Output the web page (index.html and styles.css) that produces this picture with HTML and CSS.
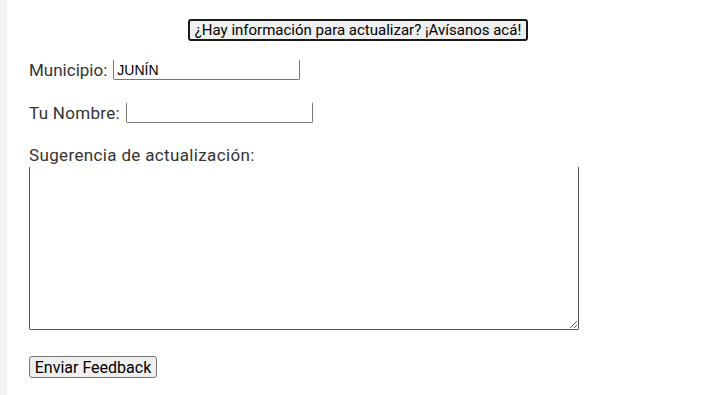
FILE: index.html
```html
<!DOCTYPE html>
<html lang="es">

<head>
    <meta charset="UTF-8">
    <meta name="viewport" content="width=device-width, initial-scale=1.0">
    <title>Feedback</title>
    <link rel="stylesheet" href="styles.css">
</head>

<body>
    <div class="side"></div>
    <div class="main">
        <div class="top">
            <button class="toggle">¿Hay información para actualizar? ¡Avísanos acá!</button>
        </div>
        <form class="feedback">
            <div class="field">
                <label for="municipio">Municipio:</label>
                <input type="text" id="municipio" value="JUNÍN">
            </div>
            <div class="field second">
                <label for="nombre">Tu Nombre:</label>
                <input type="text" id="nombre">
            </div>
            <label class="block-label" for="sugerencia">Sugerencia de actualización:</label>
            <textarea id="sugerencia"></textarea>
            <button type="button" class="send">Enviar Feedback</button>
        </form>
    </div>
</body>

</html>
```

FILE: styles.css
```css
/* page */
body {
    margin: 0;
    display: flex;
    min-height: 395px;
    background: #ffffff;
    font-family: Roboto, "Liberation Sans", Arial, sans-serif;
    color: #333333;
}

.side {
    width: 7px;
    background-color: #f3f3f3;
    flex-shrink: 0;
}

.main {
    flex: 1;
}

.top {
    text-align: center;
    padding-left: 5px;
    padding-top: 19px;
}

.toggle {
    height: 22px;
    padding: 0 5px;
    font-family: inherit;
    font-size: 15px;
    color: #000000;
    background-color: #efefef;
    border: 2px solid #1a1a1a;
    border-radius: 3px;
    line-height: 18px;
}

.feedback {
    padding-left: 22px;
}

.field {
    display: flex;
    align-items: center;
    height: 21px;
    margin-top: 18px;
    font-size: 17px;
}

.field.second {
    margin-top: 22px;
}

.field label {
    margin-right: 6px;
}

.field.second label {
    letter-spacing: 0.3px;
}

/* top edge of the boxes is barely drawn in the original */
.field input {
    box-sizing: border-box;
    width: 187px;
    height: 21px;
    padding: 1px 3px;
    font-family: "Liberation Sans", Arial, sans-serif;
    font-size: 14px;
    color: #000000;
    border: 1px solid #767676;
    border-top-color: #ffffff;
    border-radius: 2px;
}

.block-label {
    display: block;
    margin-top: 23px;
    font-size: 17px;
    line-height: 18px;
    letter-spacing: 0.35px;
}

textarea {
    display: block;
    box-sizing: border-box;
    width: 550px;
    height: 164px;
    margin-top: 2px;
    border: 1px solid #555555;
    border-top-color: #ffffff;
    border-radius: 2px;
    font-family: "Liberation Mono", monospace;
    font-size: 13.33px;
}

.send {
    display: block;
    box-sizing: border-box;
    width: 128px;
    height: 22px;
    margin-top: 26px;
    padding: 0;
    font-family: inherit;
    font-size: 16px;
    color: #000000;
    background-color: #efefef;
    border: 1px solid #767676;
    border-radius: 3px;
}
```
